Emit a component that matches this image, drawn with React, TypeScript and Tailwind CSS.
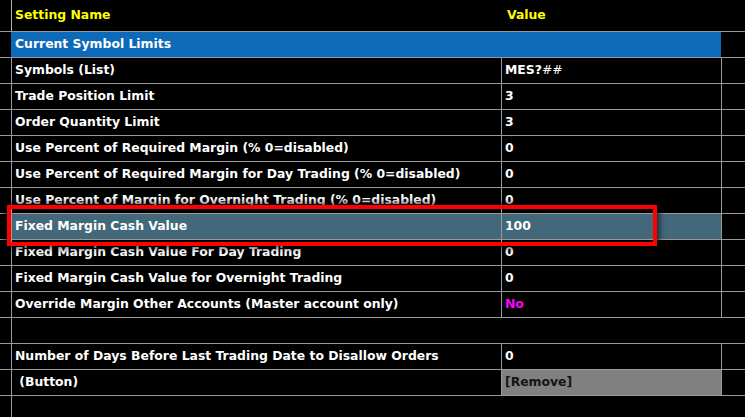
import React from "react";

type Row =
  | { kind: "pair"; name: string; value: React.ReactNode; valueClass?: string; highlight?: boolean }
  | { kind: "section"; name: string }
  | { kind: "empty" };

const rows: Row[] = [
  { kind: "section", name: "Current Symbol Limits" },
  {
    kind: "pair",
    name: "Symbols (List)",
    value: (
      <>
        MES?<span className="font-normal">##</span>
      </>
    ),
  },
  { kind: "pair", name: "Trade Position Limit", value: "3" },
  { kind: "pair", name: "Order Quantity Limit", value: "3" },
  { kind: "pair", name: "Use Percent of Required Margin (% 0=disabled)", value: "0" },
  { kind: "pair", name: "Use Percent of Required Margin for Day Trading (% 0=disabled)", value: "0" },
  { kind: "pair", name: "Use Percent of Margin for Overnight Trading (% 0=disabled)", value: "0" },
  { kind: "pair", name: "Fixed Margin Cash Value", value: "100", highlight: true },
  { kind: "pair", name: "Fixed Margin Cash Value For Day Trading", value: "0" },
  { kind: "pair", name: "Fixed Margin Cash Value for Overnight Trading", value: "0" },
  { kind: "pair", name: "Override Margin Other Accounts (Master account only)", value: "No", valueClass: "text-[#ff00ff]" },
  { kind: "empty" },
  { kind: "pair", name: "Number of Days Before Last Trading Date to Disallow Orders", value: "0" },
  { kind: "pair", name: "\u00a0(Button)", value: "[Remove]", valueClass: "bg-[#808080] text-[#141414]" },
];

export default function App() {
  return (
    <div
      className="relative w-[745px] h-[417px] overflow-hidden bg-black text-white text-[12.4px] font-bold leading-none"
      style={{ fontFamily: '"DejaVu Sans", Verdana, sans-serif' }}
    >
      {/* header */}
      <div className="flex h-[32px] border-b border-[#9a9a9a]">
        <div className="w-[11px] shrink-0" />
        <div className="w-[490px] shrink-0 border-l border-[#b0b0b0] flex items-center pl-[3px] text-[#ffff00]">
          Setting Name
        </div>
        <div className="w-[220px] shrink-0 flex items-center pl-[6px] text-[#ffff00]">Value</div>
        <div className="flex-1" />
      </div>

      {rows.map((r, i) => {
        if (r.kind === "section") {
          return (
            <div key={i} className="flex h-[26px] border-b border-[#9a9a9a]">
              <div className="w-[11px] shrink-0" />
              <div className="w-[710px] shrink-0 bg-[#0c6ab8] flex items-center pl-[4px]">{r.name}</div>
              <div className="flex-1" />
            </div>
          );
        }
        if (r.kind === "empty") {
          return (
            <div key={i} className="flex h-[26px] border-b border-[#9a9a9a]">
              <div className="w-[11px] shrink-0" />
              <div className="flex-1 border-l border-[#9a9a9a]" />
            </div>
          );
        }
        const bg = r.highlight ? "bg-[#42687a]" : "";
        return (
          <div key={i} className="flex h-[26px] border-b border-[#9a9a9a]">
            <div className="w-[11px] shrink-0" />
            <div
              className={`w-[490px] shrink-0 border-l border-[#9a9a9a] flex items-center pl-[3px] whitespace-nowrap overflow-hidden ${bg}`}
            >
              {r.name}
            </div>
            <div
              className={`w-[220px] shrink-0 border-l border-[#9a9a9a] flex items-center pl-[3px] ${bg} ${r.valueClass ?? ""}`}
            >
              {r.value}
            </div>
            <div className="flex-1 border-l border-[#9a9a9a]" />
          </div>
        );
      })}

      <div className="flex h-[30px]">
        <div className="w-[11px] shrink-0" />
        <div className="flex-1 border-l border-[#9a9a9a]" />
      </div>

      {/* red highlight box */}
      <div className="absolute left-[7px] top-[205px] w-[650px] h-[41px] border-4 border-[#ff0000] shadow-[0_0_6px_2px_rgba(0,0,0,0.7)]" />
    </div>
  );
}
